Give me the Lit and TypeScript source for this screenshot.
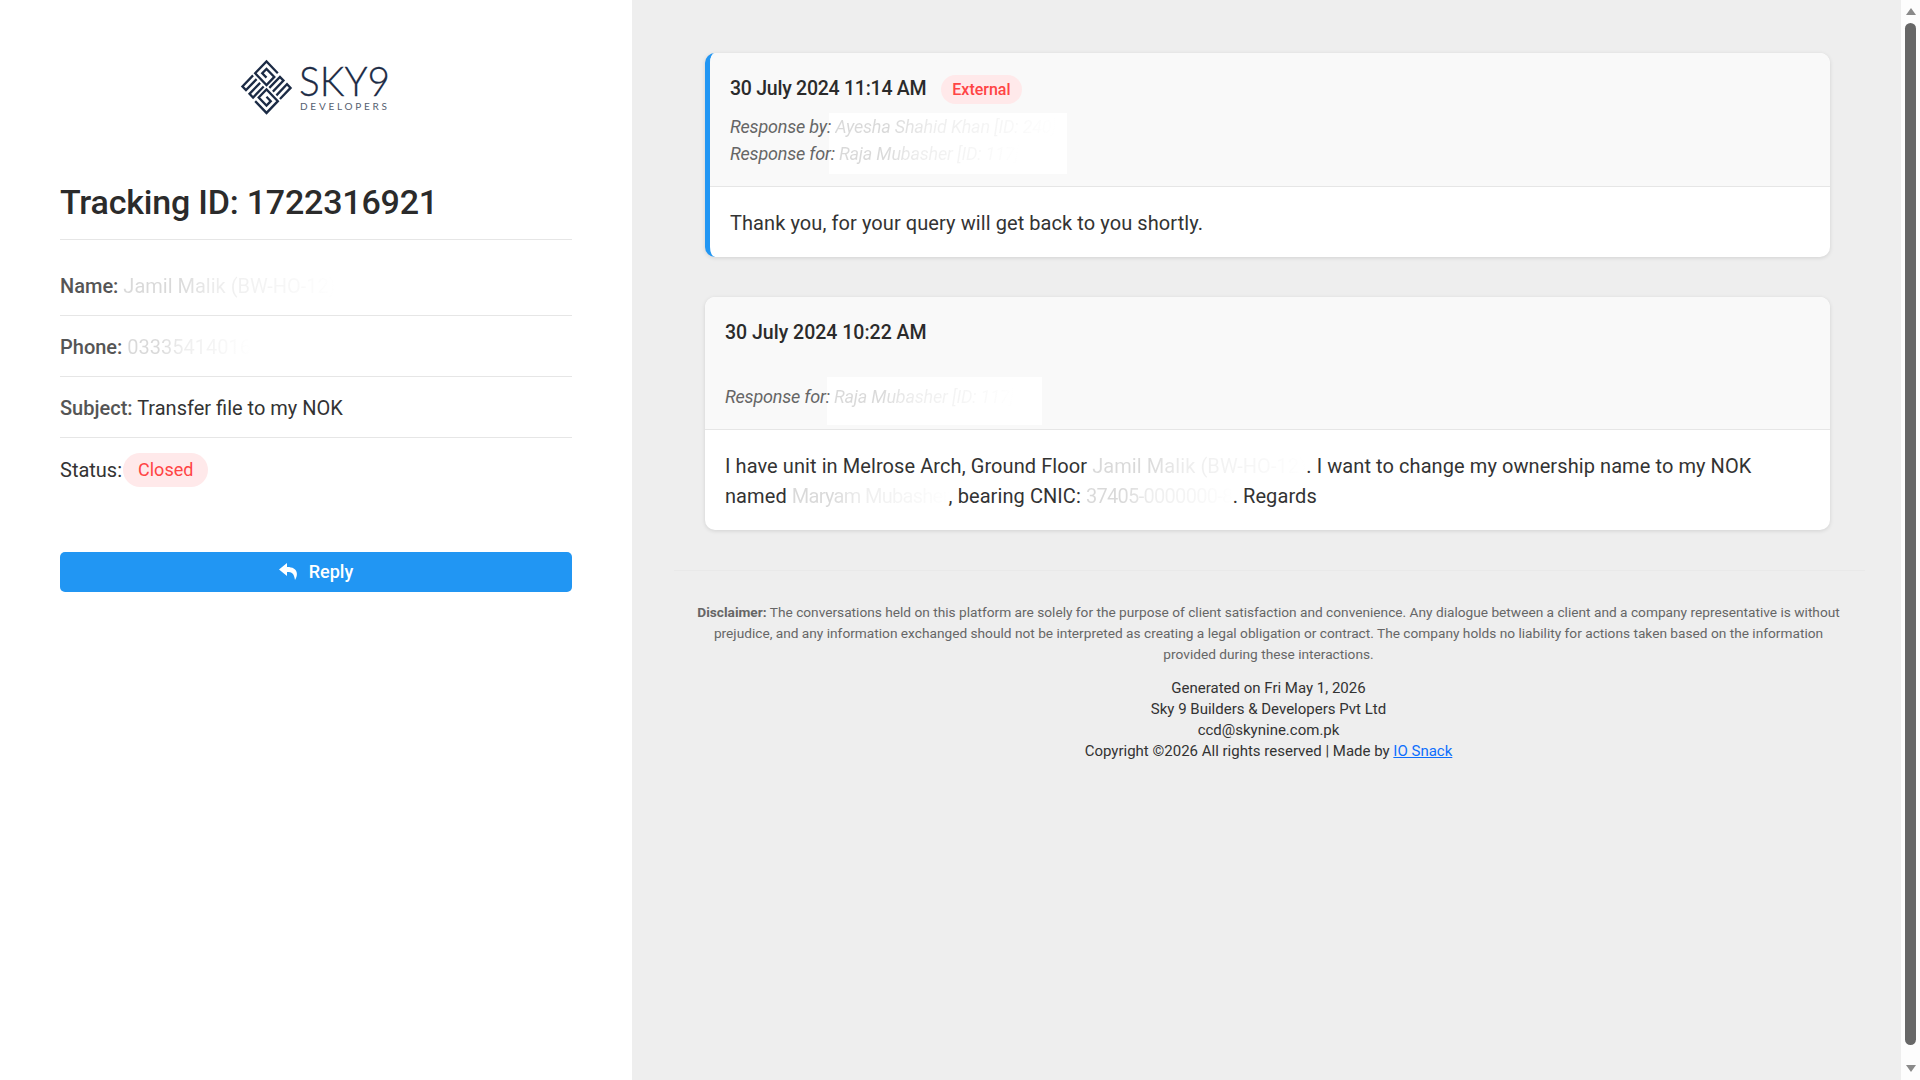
import { LitElement, css, html } from 'lit'
import { customElement } from 'lit/decorators.js'

@customElement('app-root')
export class AppRoot extends LitElement {
  static styles = css`
    :host {
      display: block;
      font-family: Roboto, 'Noto Sans', sans-serif;
      font-size: 20px;
      line-height: 30px;
      color: #333;
    }
    .page {
      display: flex;
      height: 100vh;
      overflow: hidden;
    }
    .side {
      width: 632px;
      flex: none;
      box-sizing: border-box;
      padding: 60px 60px 0;
      background: #fff;
    }
    .logo {
      display: block;
      width: 150px;
      height: 53px;
      margin: 0 auto;
      overflow: visible;
    }
    .sky {
      fill: #1c2b45;
      stroke: #1c2b45;
      stroke-width: 0.3px;
      font-family: Lato, sans-serif;
      font-weight: 300;
      font-size: 42px;
    }
    .dev {
      fill: #555e6f;
      font-family: Lato, sans-serif;
      font-size: 10px;
    }
    h1 {
      margin: 67px 0 0;
      padding-bottom: 14px;
      border-bottom: 1px solid #e6e6e6;
      font-size: 34px;
      line-height: 45px;
      font-weight: 500;
      letter-spacing: -0.2px;
      color: #2b2b2b;
    }
    .row {
      height: 30px;
      padding: 16px 0 14px;
      border-bottom: 1px solid #e6e6e6;
    }
    .row.first {
      padding-top: 31px;
    }
    .row b {
      font-weight: 500;
      color: #555;
    }
    .status {
      display: flex;
      align-items: center;
      gap: 1px;
      margin-top: 15px;
      height: 34px;
    }
    .pill {
      background: #ffe9ea;
      color: #f44;
      border-radius: 17px;
      padding: 0 15px;
      height: 34px;
      line-height: 34px;
      font-size: 18px;
    }
    .btn {
      display: flex;
      align-items: center;
      justify-content: center;
      gap: 10px;
      height: 40px;
      margin-top: 65px;
      border-radius: 5px;
      background: #2196f3;
      color: #fff;
      font-size: 18px;
      font-weight: 500;
    }
    .btn svg {
      width: 20px;
      height: 18px;
    }
    .main {
      flex: 1;
      min-width: 0;
      background: #eee;
      padding: 53px 0 0;
    }
    .cards {
      display: flex;
      flex-direction: column;
      gap: 40px;
      margin: 0 71px 0 73px;
    }
    .card {
      background: #fff;
      border-radius: 10px;
      overflow: hidden;
      box-shadow: 0 1px 4px rgba(0, 0, 0, 0.12);
    }
    .card.blue {
      border-left: 5px solid #2196f3;
    }
    .head {
      position: relative;
      background: #f9f9f9;
      border-bottom: 1px solid #e6e6e6;
      padding: 20px 20px 19px;
    }
    .date {
      display: flex;
      align-items: center;
      gap: 15px;
      font-size: 19.5px;
      font-weight: 500;
      color: #2b2b2b;
      height: 28px;
      padding-top: 2px;
      margin-bottom: 10px;
    }
    .date.tight span:first-child {
      letter-spacing: -0.25px;
    }
    .date.tall {
      margin-bottom: 36px;
    }
    .badge {
      background: #ffe9ea;
      color: #f44;
      border-radius: 15px;
      padding: 0 11px;
      height: 29px;
      line-height: 29px;
      font-size: 16px;
    }
    .meta {
      position: relative;
      font-size: 18px;
      line-height: 27px;
      font-style: italic;
      letter-spacing: -0.2px;
      color: #666;
    }
    .patch {
      position: absolute;
      background: #fff;
    }
    .patch.one {
      left: 119px;
      top: 60px;
      width: 238px;
      height: 61px;
    }
    .patch.two {
      left: 122px;
      top: 80px;
      width: 215px;
      height: 48px;
    }
    .gone {
      background: linear-gradient(90deg, #d9d9d9 0 25%, #eee 45%, #f6f6f6 75%, #fff 100%);
      -webkit-background-clip: text;
      background-clip: text;
      color: transparent;
    }
    .gone.short {
      letter-spacing: -0.7px;
    }
    .body {
      padding: 21px 20px 19px;
      letter-spacing: 0.08px;
    }
    hr {
      border: 0;
      border-top: 1px solid #e9e9e9;
      margin: 40px 36px 0 42px;
    }
    .foot {
      margin: 31px 56px 0 60px;
      font-size: 15px;
      line-height: 21px;
      text-align: center;
      color: #333;
    }
    .note {
      color: #666;
      font-size: 13.7px;
      margin: 0 0 13px;
    }
    .note b {
      font-weight: 700;
    }
    a {
      color: #0d6efd;
    }
    .bar {
      position: relative;
      width: 19px;
      flex: none;
      background: #fdfdfd;
    }
    .thumb {
      position: absolute;
      top: 23px;
      bottom: 35px;
      left: 4px;
      right: 4px;
      background: #676767;
      border-radius: 6px;
    }
    .arrow {
      position: absolute;
      left: 5px;
      width: 0;
      height: 0;
      border-left: 5px solid transparent;
      border-right: 5px solid transparent;
    }
    .arrow.up {
      top: 8px;
      border-bottom: 7px solid #8a8a8a;
    }
    .arrow.down {
      bottom: 8px;
      border-top: 7px solid #8a8a8a;
    }
  `

  render() {
    return html`
      <div class="page">
        <div class="side">
          <svg class="logo" viewBox="0 0 150 53">
            <g
              transform="translate(25.5 0) scale(1 1.04) rotate(45)"
              fill="none"
              stroke="#1c2b45"
              stroke-width="2.3"
            >
              <path d="M17 1H1V17H17V6H6V12H12" />
              <path d="M20 36H36V20H20V31H31V25H25" />
              <path d="M21 17V2H26V17M31 17V2H36V17" />
              <path d="M1 20V35H6V20M11 20V35H16V20" />
            </g>
            <text class="sky" x="58" y="36" textLength="91" lengthAdjust="spacingAndGlyphs">SKY9</text>
            <text class="dev" x="59" y="50" textLength="87">DEVELOPERS</text>
          </svg>
          <h1>Tracking ID: 1722316921</h1>
          <div class="row first"><b>Name:</b> <span class="gone">Jamil Malik (BW-HO-12)</span></div>
          <div class="row"><b>Phone:</b> <span class="gone">03335414016</span></div>
          <div class="row"><b>Subject:</b> Transfer file to my NOK</div>
          <div class="status">Status: <span class="pill">Closed</span></div>
          <div class="btn">
            <svg viewBox="0 0 20 18"><path fill="#fff" d="M8 0 0 6.5 8 13V9c5 0 7 1.5 8 8 3-4 4-13-8-13z" /></svg>
            Reply
          </div>
        </div>
        <div class="main">
          <div class="cards">
            <div class="card blue">
              <div class="head">
                <div class="patch one"></div>
                <div class="date tight"><span>30 July 2024 11:14 AM</span> <span class="badge">External</span></div>
                <div class="meta">Response by: <span class="gone">Ayesha Shahid Khan [ID: 240]</span></div>
                <div class="meta">Response for: <span class="gone">Raja Mubasher [ID: 117]</span></div>
              </div>
              <div class="body">Thank you, for your query will get back to you shortly.</div>
            </div>
            <div class="card">
              <div class="head">
                <div class="patch two"></div>
                <div class="date tall">30 July 2024 10:22 AM</div>
                <div class="meta">Response for: <span class="gone">Raja Mubasher [ID: 117]</span></div>
              </div>
              <div class="body">
                I have unit in Melrose Arch, Ground Floor <span class="gone">Jamil Malik (BW-HO-12)</span>. I want to
                change my ownership name to my NOK<br />named <span class="gone short">Maryam Mubasher</span>, bearing
                CNIC: <span class="gone short">37405-0000000-8</span>. Regards
              </div>
            </div>
          </div>
          <hr />
          <div class="foot">
            <p class="note">
              <b>Disclaimer:</b> The conversations held on this platform are solely for the purpose of client
              satisfaction and convenience. Any dialogue between a client and a company representative is without<br />
              prejudice, and any information exchanged should not be interpreted as creating a legal obligation or
              contract. The company holds no liability for actions taken based on the information<br />provided during
              these interactions.
            </p>
            <div>Generated on Fri May 1, 2026</div>
            <div>Sky 9 Builders &amp; Developers Pvt Ltd</div>
            <div>ccd@skynine.com.pk</div>
            <div>Copyright ©2026 All rights reserved | Made by <a href="#">IO Snack</a></div>
          </div>
        </div>
        <div class="bar">
          <div class="arrow up"></div>
          <div class="thumb"></div>
          <div class="arrow down"></div>
        </div>
      </div>
    `
  }
}
